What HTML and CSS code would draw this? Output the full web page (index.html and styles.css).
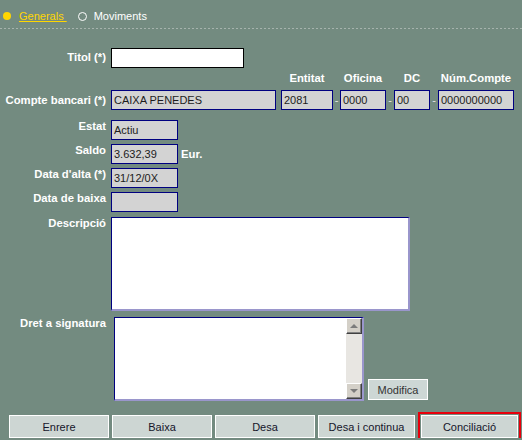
FILE: index.html
```html
<!DOCTYPE html>
<html lang="ca">
<head>
  <meta charset="UTF-8">
  <title>Compte bancari</title>
  <link rel="stylesheet" href="styles.css">
</head>

<body>
  <div class="tabs">
    <span class="tab-dot on"></span><span class="tab active">Generals&nbsp;</span>
    <span class="tab-dot"></span><span class="tab">Moviments</span>
  </div>

  <div class="form">
    <div class="row row-titol">
      <div class="lbl">Titol (*)</div>
      <div class="field white titol"></div>
    </div>

    <div class="row row-compte">
      <div class="lbl">Compte bancari (*)</div>
      <div class="acct">
        <div class="col"><span class="hd"></span><div class="field bank">CAIXA PENEDES</div></div>
        <div class="col col-ent"><span class="hd">Entitat</span><div class="field ent">2081</div></div>
        <span class="dash first">-</span>
        <div class="col"><span class="hd">Oficina</span><div class="field ofi">0000</div></div>
        <span class="dash">-</span>
        <div class="col"><span class="hd">DC</span><div class="field dc">00</div></div>
        <span class="dash">-</span>
        <div class="col"><span class="hd">Núm.Compte</span><div class="field num">0000000000</div></div>
      </div>
    </div>

    <div class="row row-first">
      <div class="lbl">Estat</div>
      <div class="field small">Actiu</div>
    </div>
    <div class="row row-next">
      <div class="lbl">Saldo</div>
      <div class="field small">3.632,39</div>
      <span class="unit">Eur.</span>
    </div>
    <div class="row row-next">
      <div class="lbl">Data d'alta (*)</div>
      <div class="field small">31/12/0X</div>
    </div>
    <div class="row row-next">
      <div class="lbl">Data de baixa</div>
      <div class="field small"></div>
    </div>

    <div class="row row-desc">
      <div class="lbl">Descripció</div>
      <div class="area desc"></div>
    </div>

    <div class="row row-dret">
      <div class="lbl">Dret a signatura</div>
      <div class="area dret">
        <div class="area-text"></div>
        <div class="scroll">
          <div class="scroll-btn"><span class="arrow up"></span></div>
          <div class="scroll-track"></div>
          <div class="scroll-btn"><span class="arrow down"></span></div>
        </div>
      </div>
      <button class="btn-mod">Modifica</button>
    </div>
  </div>

  <div class="actions">
    <button class="btn">Enrere</button>
    <button class="btn">Baixa</button>
    <button class="btn">Desa</button>
    <button class="btn narrow">Desa i continua</button>
    <button class="btn narrow focus">Conciliació</button>
  </div>
</body>
</html>
```

FILE: styles.css
```css
html {
  background: #738b80;
}
body {
  margin: 0;
  font: 11px "Liberation Sans", Arial, sans-serif;
  color: #fff;
}
*,
*::before,
*::after {
  box-sizing: border-box;
}

/* pestanyes */
.tabs {
  display: flex;
  align-items: center;
  height: 29px;
  padding: 3px 0 0 3px;
  background: repeating-linear-gradient(90deg, #a6b3ad 0 2px, transparent 2px 4px) left bottom / 100% 1px no-repeat;
}
.tab-dot {
  width: 9px;
  height: 9px;
  border: 1px solid #fff;
  border-radius: 50%;
  margin: 0 7px 0 11px;
}
.tab-dot.on {
  width: 8px;
  height: 8px;
  border: 0;
  background: #ffd600;
  margin: 0 8px 0 0;
}
.tab {
  line-height: 13px;
  color: #fff;
}
.tab.active {
  color: #ffd600;
  text-decoration: underline;
}

/* formulari */
.form {
  padding-top: 19px;
}
.row {
  display: flex;
  align-items: flex-start;
}
.lbl {
  flex: none;
  width: 106px;
  margin-right: 5px;
  text-align: right;
  font-size: 11.3px;
  font-weight: bold;
  line-height: 13px;
  white-space: nowrap;
}
.row-titol .lbl {
  padding-top: 3px;
}
.row-compte {
  margin-top: 4px;
}
.row-compte .lbl {
  padding-top: 22px;
}
.row-first {
  margin-top: 10px;
}
.row-next {
  margin-top: 4px;
}
.row-desc {
  margin-top: 5px;
}
.row-dret {
  margin-top: 6px;
}

.field {
  flex: none;
  height: 20px;
  padding: 0 2px;
  line-height: 18px;
  border: 1px solid #000080;
  color: #1c1c1c;
  white-space: nowrap;
  background: #d3d3d3;
}
.field.white {
  border-color: #000;
  background: #fff;
}
.titol { width: 133px; }
.bank { width: 165px; }
.ent { width: 52px; }
.ofi { width: 46px; }
.dc { width: 36px; }
.num { width: 76px; }
.small { width: 67px; }

.acct {
  display: flex;
}
.col {
  display: flex;
  flex-direction: column;
}
.col-ent {
  margin-left: 5px;
}
.hd {
  height: 13px;
  margin-bottom: 5px;
  line-height: 13px;
  text-align: center;
  font-size: 11.3px;
  font-weight: bold;
  white-space: nowrap;
}
.dash {
  align-self: flex-end;
  width: 8px;
  height: 20px;
  padding-top: 1px;
  line-height: 18px;
  text-align: center;
  color: #e4e4e4;
}
.dash.first {
  width: 7px;
}
.unit {
  align-self: center;
  margin-left: 3px;
  font-size: 11.3px;
  font-weight: bold;
}

/* textarees */
.area {
  flex: none;
  background: #fff;
  border: 1px solid #000080;
  border-right: 2px solid #9a96cc;
  border-bottom: 2px solid #9a96cc;
}
.desc {
  width: 299px;
  height: 94px;
}
.dret {
  display: flex;
  width: 250px;
  height: 84px;
  margin-left: 3px;
}
.area-text {
  flex: 1;
}
.scroll {
  display: flex;
  flex-direction: column;
  width: 16px;
}
.scroll-btn {
  display: flex;
  align-items: center;
  justify-content: center;
  height: 16px;
  background: #d4d0c8;
  border: 1px solid;
  border-color: #fff #404040 #404040 #fff;
  box-shadow: inset -1px -1px #808080;
}
.scroll-track {
  flex: 1;
  background: #e8e6e2;
}
.arrow {
  width: 0;
  height: 0;
  border-left: 4px solid transparent;
  border-right: 4px solid transparent;
}
.arrow.up {
  border-bottom: 4px solid #7c7c7c;
}
.arrow.down {
  border-top: 4px solid #7c7c7c;
}

.btn-mod {
  align-self: flex-end;
  width: 60px;
  height: 21px;
  margin: 0 0 1px 4px;
  padding: 0;
  border: 1px solid #fff;
  background: #cdd7d5;
  color: #333;
  font: 11px "Liberation Sans", Arial, sans-serif;
}

/* botons */
.actions {
  display: flex;
  gap: 3px;
  margin-top: 14px;
  padding-left: 9px;
}
.btn {
  width: 100px;
  height: 23px;
  padding: 0;
  border: 1px solid #fff;
  background: #cdd6d3;
  color: #15152a;
  font: 11px "Liberation Sans", Arial, sans-serif;
}
.btn.narrow {
  width: 97px;
}
.btn.focus {
  margin-left: 3px;
  outline: 2px solid #e8000b;
  outline-offset: 1px;
}
```
